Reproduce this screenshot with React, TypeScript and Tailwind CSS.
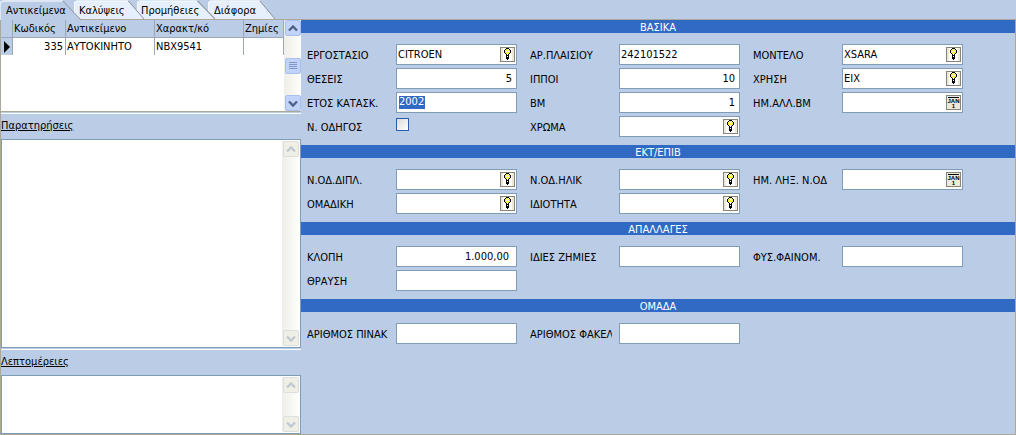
import { useState } from 'react'
import type { ReactNode } from 'react'
import clsx from 'clsx'

type FieldIcon = 'lookup' | 'date'

type Field = {
  id: string
  label: string
  value?: string
  numeric?: boolean
  money?: boolean
  selected?: boolean
  checkbox?: boolean
  icon?: FieldIcon
}

type Section = {
  title: string
  rows: (Field | null)[][]
}

const TABS = [
  { label: 'Αντικείμενα', box: 'w-[81px] pl-[6px] z-40' },
  { label: 'Καλύψεις', box: 'w-[70px] pl-[5px] -ml-[7px] z-30' },
  { label: 'Προμήθειες', box: 'w-[78px] pl-[4px] -ml-[7px] z-20' },
  { label: 'Διάφορα', box: 'w-[67px] pl-[6px] -ml-[7px] z-10' },
]

const SECTIONS: Section[] = [
  {
    title: 'ΒΑΣΙΚΑ',
    rows: [
      [
        { id: 'factory', label: 'ΕΡΓΟΣΤΑΣΙΟ', value: 'CITROEN', icon: 'lookup' },
        { id: 'chassis', label: 'ΑΡ.ΠΛΑΙΣΙΟΥ', value: '242101522' },
        { id: 'model', label: 'ΜΟΝΤΕΛΟ', value: 'XSARA', icon: 'lookup' },
      ],
      [
        { id: 'seats', label: 'ΘΕΣΕΙΣ', value: '5', numeric: true },
        { id: 'horsepower', label: 'ΙΠΠΟΙ', value: '10', numeric: true },
        { id: 'usage', label: 'ΧΡΗΣΗ', value: 'ΕΙΧ', icon: 'lookup' },
      ],
      [
        { id: 'year', label: 'ΕΤΟΣ ΚΑΤΑΣΚ.', value: '2002', selected: true },
        { id: 'bm', label: 'ΒΜ', value: '1', numeric: true },
        { id: 'bmDate', label: 'ΗΜ.ΑΛΛ.ΒΜ', icon: 'date' },
      ],
      [
        { id: 'newDriver', label: 'Ν. ΟΔΗΓΟΣ', checkbox: true },
        { id: 'color', label: 'ΧΡΩΜΑ', icon: 'lookup' },
        null,
      ],
    ],
  },
  {
    title: 'ΕΚΤ/ΕΠΙΒ',
    rows: [
      [
        { id: 'driverLicence', label: 'Ν.ΟΔ.ΔΙΠΛ.', icon: 'lookup' },
        { id: 'driverAge', label: 'Ν.ΟΔ.ΗΛΙΚ', icon: 'lookup' },
        { id: 'driverExpiry', label: 'ΗΜ. ΛΗΞ. Ν.ΟΔ', icon: 'date' },
      ],
      [
        { id: 'group', label: 'ΟΜΑΔΙΚΗ', icon: 'lookup' },
        { id: 'capacity', label: 'ΙΔΙΟΤΗΤΑ', icon: 'lookup' },
        null,
      ],
    ],
  },
  {
    title: 'ΑΠΑΛΛΑΓΕΣ',
    rows: [
      [
        { id: 'theft', label: 'ΚΛΟΠΗ', value: '1.000,00', money: true },
        { id: 'ownDamage', label: 'ΙΔΙΕΣ ΖΗΜΙΕΣ' },
        { id: 'nature', label: 'ΦΥΣ.ΦΑΙΝΟΜ.' },
      ],
      [{ id: 'glass', label: 'ΘΡΑΥΣΗ' }, null, null],
    ],
  },
  {
    title: 'ΟΜΑΔΑ',
    rows: [
      [
        { id: 'plateNo', label: 'ΑΡΙΘΜΟΣ ΠΙΝΑΚ' },
        { id: 'folderNo', label: 'ΑΡΙΘΜΟΣ ΦΑΚΕΛ' },
        null,
      ],
    ],
  },
]

// # outline, Y glass, W highlight
const BULB = [
  '..###..',
  '.#YYW#.',
  '#YYWYY#',
  '#YWYWY#',
  '#YYYYY#',
  '.#YWY#.',
  '..#W#..',
  '..###..',
  '..#W#..',
  '..###..',
  '..###..',
  '...#...',
]

const BULB_COLORS: Record<string, string> = { '#': '#000000', Y: '#f4ea3c', W: '#ffffff' }

function BulbIcon() {
  return (
    <svg width="9" height="13" viewBox="0 0 9 13" shapeRendering="crispEdges" aria-hidden="true">
      <rect width="9" height="13" fill="#fff" />
      {BULB.flatMap((row, y) =>
        row
          .split('')
          .map((cell, x) =>
            cell === '.' ? null : (
              <rect key={`${x}-${y}`} x={x + 1} y={y} width="1" height="1" fill={BULB_COLORS[cell]} />
            ),
          ),
      )}
    </svg>
  )
}

function CalendarIcon() {
  return (
    <svg width="13" height="13" viewBox="0 0 13 13" aria-hidden="true">
      <rect x="1" y="1" width="11" height="1" fill="#000" />
      <g fontFamily="Liberation Sans, sans-serif" fontWeight="700" fontSize="6" textAnchor="middle">
        <text x="6.5" y="7">JAN</text>
        <text x="6.5" y="12">1</text>
      </g>
    </svg>
  )
}

function ScrollButton({ up, muted }: { up?: boolean; muted?: boolean }) {
  return (
    <button
      type="button"
      aria-label={up ? 'Scroll up' : 'Scroll down'}
      className={clsx(
        'flex h-4 w-4 shrink-0 items-center justify-center rounded-[2px] border',
        muted ? 'border-[#dcdfe0] bg-[#f0efe6]' : 'border-[#a9bfee] bg-[#c2d3fb]',
      )}
    >
      <svg width="10" height="7" viewBox="0 0 10 7" aria-hidden="true">
        <path
          d={up ? 'M1 5.5L5 1.5L9 5.5' : 'M1 1.5L5 5.5L9 1.5'}
          fill="none"
          stroke={muted ? '#c0c8d4' : '#4d6185'}
          strokeWidth="2.4"
        />
      </svg>
    </button>
  )
}

function ScrollBar({ muted, children }: { muted?: boolean; children?: ReactNode }) {
  return (
    <div className="flex w-[17px] shrink-0 flex-col items-center justify-between bg-linear-to-r from-[#efeee8] to-[#fefefb]">
      <ScrollButton up muted={muted} />
      {children}
      <ScrollButton muted={muted} />
    </div>
  )
}

function Tab({
  label,
  box,
  active,
  onSelect,
}: {
  label: string
  box: string
  active: boolean
  onSelect: () => void
}) {
  return (
    <button
      type="button"
      role="tab"
      aria-selected={active}
      onClick={onSelect}
      className={clsx(
        'relative flex shrink-0 items-start pt-[3px] text-left leading-4 whitespace-nowrap',
        active ? 'h-5' : 'h-[19px]',
        box,
      )}
    >
      <svg
        className="absolute inset-0 h-full w-full"
        viewBox="0 0 80 20"
        preserveAspectRatio="none"
        aria-hidden="true"
      >
        <path d="M0 20V3L3 1H62L80 20Z" fill={active ? '#bbcde6' : '#e6effc'} />
        <path d="M0 20V3L3 1H62" fill="none" stroke="#fff" vectorEffect="non-scaling-stroke" />
        <path d="M62 1L80 20" fill="none" stroke="#8e9196" vectorEffect="non-scaling-stroke" />
      </svg>
      <span className="relative">{label}</span>
    </button>
  )
}

function ItemsGrid() {
  return (
    <div className="flex h-[92px] border-b border-[#aca899] bg-white">
      <div className="min-w-0 flex-1">
        <table className="w-full table-fixed border-separate border-spacing-0 leading-4">
          <colgroup>
            <col className="w-[12px]" />
            <col className="w-[53px]" />
            <col className="w-[89px]" />
            <col className="w-[89px]" />
            <col />
          </colgroup>
          <thead>
            <tr className="h-[18px] bg-[#bbcde6] text-left">
              {['', 'Κωδικός', 'Αντικείμενο', 'Χαρακτ/κό', 'Ζημίες'].map((head) => (
                <th
                  key={head}
                  className="overflow-hidden border-r border-b border-[#9ea7b8] p-0 pt-px pl-px font-normal whitespace-nowrap"
                >
                  {head}
                </th>
              ))}
            </tr>
          </thead>
          <tbody>
            <tr className="h-[17px]">
              <td className="border-r border-[#9ea7b8] bg-[#bbcde6] p-0">
                <svg width="8" height="12" viewBox="0 0 8 12" className="ml-[2px]" aria-hidden="true">
                  <path d="M1 0L7 6L1 12Z" fill="#000" />
                </svg>
              </td>
              <td className="border-r border-[#9ea7b8] p-0 pr-[2px] text-right">335</td>
              <td className="border-r border-[#9ea7b8] p-0 pl-px">ΑΥΤΟΚΙΝΗΤΟ</td>
              <td className="border-r border-[#9ea7b8] p-0 pl-px">ΝΒΧ9541</td>
              <td className="border-r border-[#9ea7b8] p-0" />
            </tr>
          </tbody>
        </table>
      </div>
      <ScrollBar>
        <div className="flex h-4 w-4 flex-col items-center justify-center gap-px rounded-[2px] border border-[#a9bfee] bg-[#c2d3fb]">
          <span className="h-px w-2 bg-[#8296c4]" />
          <span className="h-px w-2 bg-[#8296c4]" />
          <span className="h-px w-2 bg-[#8296c4]" />
          <span className="h-px w-2 bg-[#8296c4]" />
        </div>
      </ScrollBar>
    </div>
  )
}

function Memo({ id, label, className }: { id: string; label: string; className: string }) {
  return (
    <div className={clsx('flex flex-col', className)}>
      <div className="h-px bg-white" />
      <label htmlFor={id} className="h-[25px] pt-1 leading-4 underline">
        {label}
      </label>
      <div className="flex min-h-0 flex-1 border border-[#7f9db9] bg-white py-px pr-px">
        <textarea id={id} className="min-w-0 flex-1 resize-none overflow-hidden px-1 outline-none" />
        <ScrollBar muted />
      </div>
    </div>
  )
}

function FormField({ field }: { field: Field }) {
  return (
    <div className="flex h-[21px]">
      <label
        htmlFor={field.id}
        className="mr-[7px] w-[82px] shrink-0 overflow-hidden pt-1 leading-4 whitespace-nowrap"
      >
        {field.label}
      </label>
      {field.checkbox ? (
        <input
          id={field.id}
          type="checkbox"
          className="mt-[2px] h-[13px] w-[13px] appearance-none border border-[#2a5db0] bg-linear-to-br from-[#dcdcd7] to-white"
        />
      ) : (
        <div className="flex min-w-0 flex-1 items-center border border-[#7f9db9] bg-white pr-px">
          <input
            id={field.id}
            type="text"
            defaultValue={field.value}
            className={clsx(
              'min-w-0 outline-none',
              field.selected
                ? 'mb-px ml-[2px] h-[13px] w-[26px] bg-[#316ac5] text-white'
                : 'h-full w-full flex-1 pb-px pl-px',
              field.numeric && 'pr-[3px] text-right',
              field.money && 'pr-[6px] text-right',
            )}
          />
          {field.icon && (
            <button
              type="button"
              aria-label={field.label}
              className="flex h-[15px] w-[15px] shrink-0 items-center justify-center border border-[#85857c] bg-[#ece9d8]"
            >
              {field.icon === 'lookup' ? <BulbIcon /> : <CalendarIcon />}
            </button>
          )}
        </div>
      )}
    </div>
  )
}

function FormSection({ section }: { section: Section }) {
  return (
    <section>
      <h2 className="h-[13px] bg-[#316ac5] text-center leading-4 text-white">{section.title}</h2>
      <div className="grid grid-cols-[repeat(3,210px)] gap-x-[13px] gap-y-[3px] pt-[11px] pb-2 pl-[6px]">
        {section.rows.flatMap((row, r) =>
          row.map((field, c) =>
            field ? <FormField key={field.id} field={field} /> : <div key={`${r}-${c}`} />,
          ),
        )}
      </div>
    </section>
  )
}

export default function App() {
  const [activeTab, setActiveTab] = useState(0)

  return (
    <div className="flex min-h-screen flex-col bg-[#bbcde6] font-['DejaVu_Sans_Condensed','DejaVu_Sans',sans-serif] text-[11px] text-black">
      <div role="tablist" className="flex h-[19px] items-start">
        {TABS.map((tab, i) => (
          <Tab
            key={tab.label}
            label={tab.label}
            box={tab.box}
            active={i === activeTab}
            onSelect={() => setActiveTab(i)}
          />
        ))}
      </div>
      <main className="flex flex-1 border border-[#aca899]">
        <div className="flex w-[300px] shrink-0 flex-col">
          <ItemsGrid />
          <Memo id="notes" label="Παρατηρήσεις" className="mt-px flex-1" />
          <Memo id="details" label="Λεπτομέρειες" className="mt-px h-[85px]" />
        </div>
        <div className="min-w-0 flex-1">
          {SECTIONS.map((section) => (
            <FormSection key={section.title} section={section} />
          ))}
        </div>
      </main>
    </div>
  )
}
